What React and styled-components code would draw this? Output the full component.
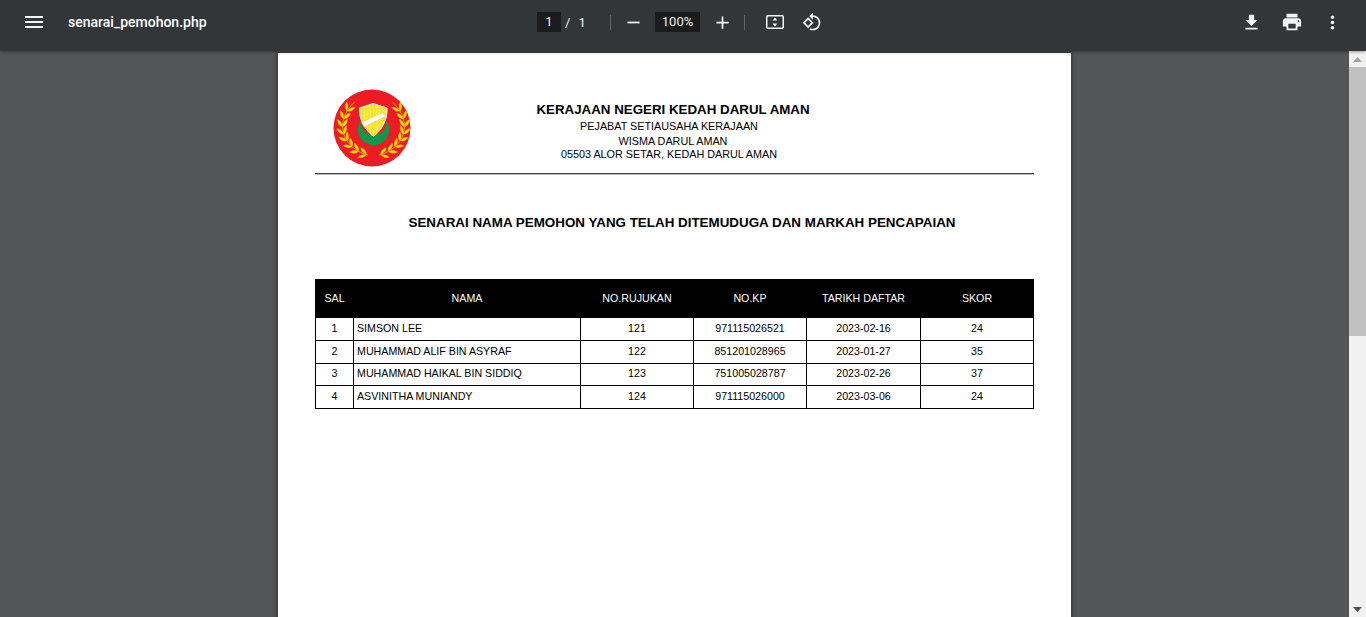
import React from 'react';
import styled, { createGlobalStyle } from 'styled-components';

const GlobalStyle = createGlobalStyle`
  html, body {
    margin: 0;
    height: 100%;
    overflow: hidden;
  }
  #root {
    height: 100%;
  }
`;

const Shell = styled.div`
  display: flex;
  flex-direction: column;
  height: 617px;
  background: #525659;
`;

const Toolbar = styled.header`
  display: grid;
  grid-template-columns: 1fr auto 1fr;
  align-items: center;
  flex: none;
  height: 51px;
  padding-bottom: 7px;
  box-sizing: border-box;
  background: #323639;
  color: #f1f3f4;
  font-family: Roboto, "Liberation Sans", sans-serif;
  box-shadow: 0 1px 3px rgba(0, 0, 0, 0.35);
  position: relative;
  z-index: 2;
`;

const ToolLeft = styled.div`
  display: flex;
  align-items: center;
  padding-left: 22px;
`;

const FileName = styled.span`
  margin-left: 22px;
  font-size: 14px;
  font-weight: 500;
  color: #fff;
`;

const ToolCenter = styled.div`
  display: flex;
  align-items: center;
  margin-right: 7px;
`;

const ToolRight = styled.div`
  display: flex;
  align-items: center;
  justify-content: flex-end;
  padding-right: 23px;
  gap: 19px;
`;

const Icon = styled.svg`
  display: block;
  flex: none;
  margin-left: ${props => props.$ml || 0}px;
  fill: ${props => props.$fill || '#f1f3f4'};
`;

const NumBox = styled.span`
  display: block;
  flex: none;
  width: ${props => props.$w}px;
  height: 20px;
  margin-left: ${props => props.$ml || 0}px;
  line-height: 20px;
  background: #191b1c;
  text-align: center;
  font-size: 13px;
  color: #f1f3f4;
`;

const PageCount = styled.span`
  flex: none;
  width: 49px;
  padding-left: 4px;
  box-sizing: border-box;
  font-size: 13px;
  word-spacing: 5px;
`;

const Sep = styled.span`
  display: block;
  flex: none;
  width: 1px;
  height: 15px;
  margin-left: ${props => props.$ml || 0}px;
  background: #5f6368;
`;

const Viewer = styled.div`
  display: flex;
  flex: 1;
  min-height: 0;
`;

const PageArea = styled.main`
  flex: 1;
  display: flex;
  justify-content: center;
  padding-top: 2px;
  overflow: hidden;
`;

const Paper = styled.section`
  flex: none;
  width: 793px;
  height: 1122px;
  padding: 36px 37px 0;
  box-sizing: border-box;
  background: #fff;
  color: #000;
  font-family: "Liberation Sans", Arial, sans-serif;
  box-shadow: 0 0 4px 1px rgba(0, 0, 0, 0.4);
`;

const Letterhead = styled.div`
  display: flex;
  height: 84px;
  padding-left: 18px;
  border-bottom: 1px solid #444;
  box-shadow: 0 1px 0 #bbb;
`;

const Logo = styled.svg`
  display: block;
  flex: none;
`;

const Address = styled.div`
  flex: 1;
  padding: 12px 107px 0 0;
  text-align: center;
`;

const AddressLine = styled.div`
  padding-left: ${props => props.$shift || 0}px;
  font-size: ${props => (props.$bold ? '13.33px' : '10.8px')};
  line-height: ${props => props.$lh}px;
  font-weight: ${props => (props.$bold ? 700 : 400)};
`;

const ReportTitle = styled.h1`
  margin: 41px 0 48px;
  padding-left: 15px;
  text-align: center;
  font-size: 13.4px;
  line-height: 16px;
  font-weight: 700;
`;

const Table = styled.table`
  width: 718px;
  border-collapse: collapse;
  table-layout: fixed;
  font-size: 10.67px;
`;

const Col = styled.col`
  width: ${props => props.$w}px;
`;

const HeadCell = styled.th`
  height: 35px;
  padding: 0 0 2px;
  background: #000;
  color: #fff;
  font-weight: 400;
  border: 1px solid #000;
`;

const Cell = styled.td`
  height: 19.75px;
  padding: 0 3px 2px;
  border: 1px solid #000;
  text-align: ${props => (props.$left ? 'left' : 'center')};
  white-space: nowrap;
`;

const Scrollbar = styled.aside`
  flex: none;
  display: flex;
  flex-direction: column;
  align-items: center;
  width: 17px;
  background: #f1f1f1;
`;

const ScrollButton = styled.div`
  flex: none;
  height: 16px;
  display: flex;
  align-items: center;
  justify-content: center;
`;

const Thumb = styled.div`
  flex: none;
  width: 100%;
  height: 269px;
  background: #c1c1c1;
`;

const ScrollTrack = styled.div`
  flex: 1;
`;

const COLS = [38, 227, 113, 113, 114, 113];
const HEADS = ['SAL', 'NAMA', 'NO.RUJUKAN', 'NO.KP', 'TARIKH DAFTAR', 'SKOR'];
const ROWS = [
  ['1', 'SIMSON LEE', '121', '971115026521', '2023-02-16', '24'],
  ['2', 'MUHAMMAD ALIF BIN ASYRAF', '122', '851201028965', '2023-01-27', '35'],
  ['3', 'MUHAMMAD HAIKAL BIN SIDDIQ', '123', '751005028787', '2023-02-26', '37'],
  ['4', 'ASVINITHA MUNIANDY', '124', '971115026000', '2023-03-06', '24'],
];

const ICONS = {
  menu: 'M3 18h18v-2H3v2zm0-5h18v-2H3v2zm0-7v2h18V6H3z',
  minus: 'M19 13H5v-2h14v2z',
  plus: 'M19 13h-6v6h-2v-6H5v-2h6V5h2v6h6v2z',
  rotate: 'M7.34 6.41L.86 12.9l6.49 6.48 6.49-6.48-6.5-6.49zM3.69 12.9l3.66-3.66L11 12.9l-3.66 3.66-3.65-3.66zm15.67-6.26C17.61 4.88 15.3 4 13 4V.76L8.76 5 13 9.24V6c1.79 0 3.58.68 4.95 2.05 2.73 2.73 2.73 7.17 0 9.9C16.58 19.32 14.79 20 13 20c-.97 0-1.94-.21-2.84-.61l-1.49 1.49C10.02 21.62 11.51 22 13 22c2.3 0 4.61-.88 6.36-2.64 3.52-3.51 3.52-9.21 0-12.72z',
  download: 'M19 9h-4V3H9v6H5l7 7 7-7zM5 18v2h14v-2H5z',
  print: 'M19 8H5c-1.66 0-3 1.34-3 3v6h4v4h12v-4h4v-6c0-1.66-1.34-3-3-3zm-3 11H8v-5h8v5zm3-7c-.55 0-1-.45-1-1s.45-1 1-1 1 .45 1 1-.45 1-1 1zm-1-9H6v4h12V3z',
  more: 'M12 8c1.1 0 2-.9 2-2s-.9-2-2-2-2 .9-2 2 .9 2 2 2zm0 2c-1.1 0-2 .9-2 2s.9 2 2 2 2-.9 2-2-.9-2-2-2zm0 6c-1.1 0-2 .9-2 2s.9 2 2 2 2-.9 2-2-.9-2-2-2z',
};

const ToolIcon = ({ name, size = 24, ml }) => (
  <Icon width={size} height={size} viewBox="0 0 24 24" $ml={ml}>
    <path d={ICONS[name]} />
  </Icon>
);

const FitIcon = ({ ml }) => (
  <Icon width="18" height="14" viewBox="0 0 18 14" $fill="none" $ml={ml}>
    <rect x="0.75" y="0.75" width="16.5" height="12.5" rx="1" stroke="#f1f3f4" strokeWidth="1.5" />
    <path d="M9 2.6l2.4 2.9H6.6zM9 11.4l2.4-2.9H6.6z" fill="#f1f3f4" />
  </Icon>
);

// point and angle on the wreath stem, from the bottom of the logo to the top
const stemPoint = t => {
  const p = [[34.8, 66], [11, 60], [-1, 34], [21.5, 13]];
  const u = 1 - t;
  const b = [u * u * u, 3 * u * u * t, 3 * u * t * t, t * t * t];
  const x = b.reduce((s, k, i) => s + k * p[i][0], 0);
  const y = b.reduce((s, k, i) => s + k * p[i][1], 0);
  const dx = 3 * u * u * (p[1][0] - p[0][0]) + 6 * u * t * (p[2][0] - p[1][0]) + 3 * t * t * (p[3][0] - p[2][0]);
  const dy = 3 * u * u * (p[1][1] - p[0][1]) + 6 * u * t * (p[2][1] - p[1][1]) + 3 * t * t * (p[3][1] - p[2][1]);
  return { x, y, a: (Math.atan2(dy, dx) * 180) / Math.PI };
};

const LEAF = 'M0 0C1.4-2.8 4.8-3.8 8.4-3.2C7.2-.6 3.2.4 0 0z';

const Wreath = () => {
  const steps = [0.02, 0.14, 0.26, 0.38, 0.5, 0.62, 0.74, 0.86];
  return (
    <g>
      <path d="M34.8 66C11 60-1 34 21.5 13" fill="none" stroke="#f2a900" strokeWidth="0.9" />
      {steps.map(t => {
        const { x, y, a } = stemPoint(t);
        return (
          <g key={t} transform={`translate(${x} ${y}) rotate(${a})`}>
            <path d={LEAF} transform="rotate(-14)" fill="#ffe000" stroke="#f5b000" strokeWidth="0.25" />
            <path d={LEAF} transform="scale(1 -1) rotate(-14)" fill="#ffe000" stroke="#f5b000" strokeWidth="0.25" />
          </g>
        );
      })}
    </g>
  );
};

const KedahLogo = () => (
  <Logo width="78" height="78" viewBox="0 0 78 78">
    <circle cx="39" cy="39" r="38.5" fill="#ed1c24" />
    <circle cx="40.5" cy="40.5" r="15.7" fill="#0a9a4a" />
    <circle cx="40.5" cy="33" r="13" fill="#ed1c24" />
    <Wreath />
    <g transform="matrix(-1 0 0 1 81 0)">
      <Wreath />
    </g>
    <path d="M26.5 19L40 14.5L54 19C54.5 30 50 40 40.5 47.5C31 40 26 30 26.5 19Z" fill="#fff04d" stroke="#fff" strokeWidth="1" />
    <path d="M30 18v14M33 17v22M36 16v26M39 15v31M42 15v31M45 16v26M48 17v22M51 18v14" stroke="#f7c400" strokeWidth="0.7" />
    <path d="M28.5 33.5L50 23.5L52.5 27.5L31 38Z" fill="#fff" stroke="#d9a300" strokeWidth="0.3" />
  </Logo>
);

const App = () => (
  <Shell>
    <GlobalStyle />
    <Toolbar>
      <ToolLeft>
        <ToolIcon name="menu" />
        <FileName>senarai_pemohon.php</FileName>
      </ToolLeft>
      <ToolCenter>
        <NumBox $w={24}>1</NumBox>
        <PageCount>/ 1</PageCount>
        <Sep />
        <ToolIcon name="minus" size={21} ml={12} />
        <NumBox $w={45} $ml={11}>100%</NumBox>
        <ToolIcon name="plus" size={21} ml={12} />
        <Sep $ml={11} />
        <FitIcon ml={21} />
        <ToolIcon name="rotate" size={20} ml={18} />
      </ToolCenter>
      <ToolRight>
        <ToolIcon name="download" size={21} />
        <ToolIcon name="print" size={22} />
        <ToolIcon name="more" size={21} />
      </ToolRight>
    </Toolbar>
    <Viewer>
      <PageArea>
        <Paper>
          <Letterhead>
            <KedahLogo />
            <Address>
              <AddressLine $bold $lh={17} $shift={8}>KERAJAAN NEGERI KEDAH DARUL AMAN</AddressLine>
              <AddressLine $lh={16}>PEJABAT SETIAUSAHA KERAJAAN</AddressLine>
              <AddressLine $lh={14} $shift={8}>WISMA DARUL AMAN</AddressLine>
              <AddressLine $lh={13}>05503 ALOR SETAR, KEDAH DARUL AMAN</AddressLine>
            </Address>
          </Letterhead>
          <ReportTitle>SENARAI NAMA PEMOHON YANG TELAH DITEMUDUGA DAN MARKAH PENCAPAIAN</ReportTitle>
          <Table>
            <colgroup>
              {COLS.map((w, i) => <Col key={i} $w={w} />)}
            </colgroup>
            <thead>
              <tr>{HEADS.map(h => <HeadCell key={h}>{h}</HeadCell>)}</tr>
            </thead>
            <tbody>
              {ROWS.map(row => (
                <tr key={row[0]}>
                  {row.map((v, i) => <Cell key={i} $left={i === 1}>{v}</Cell>)}
                </tr>
              ))}
            </tbody>
          </Table>
        </Paper>
      </PageArea>
      <Scrollbar>
        <ScrollButton>
          <Icon width="9" height="5" viewBox="0 0 9 5" $fill="#a3a3a3"><path d="M4.5 0L9 5H0z" /></Icon>
        </ScrollButton>
        <Thumb />
        <ScrollTrack />
        <ScrollButton>
          <Icon width="9" height="5" viewBox="0 0 9 5" $fill="#505050"><path d="M0 0h9L4.5 5z" /></Icon>
        </ScrollButton>
      </Scrollbar>
    </Viewer>
  </Shell>
);

export default App;
